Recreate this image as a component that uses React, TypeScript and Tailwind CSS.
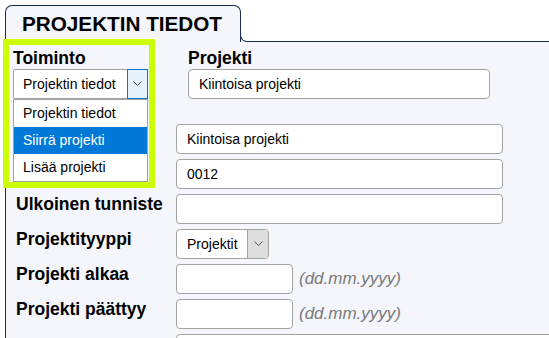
const line = "border-[#172b4d]";

function Chevron({ color = "#444" }: { color?: string }) {
  return (
    <svg width="9" height="6" viewBox="0 0 9 6" fill="none">
      <polyline points="0.5,0.5 4.5,4.5 8.5,0.5" stroke={color} strokeWidth="1" />
    </svg>
  );
}

function TextInput({ value = "", w }: { value?: string; w: string }) {
  return (
    <div className={`${w} h-[30px] rounded-[4px] border border-[#a3a3a3] bg-white pl-[10px] flex items-center text-[14px]`}>
      {value}
    </div>
  );
}

// first two rows have their labels under the open Toiminto menu
const rows = [
  { label: "", value: "Kiintoisa projekti" },
  { label: "", value: "0012" },
  { label: "Ulkoinen tunniste", value: "" },
];

export default function App() {
  return (
    <div className="min-h-screen overflow-hidden bg-white pl-[5px] pt-[5px] font-['Liberation_Sans',Arial,sans-serif] text-black">
      {/* tab */}
      <div className="flex items-end">
        <div className={`h-[37px] w-[236px] shrink-0 rounded-t-[7px] border-l border-r border-t ${line} bg-[#f4f6fb] pl-[16px] flex items-center text-[20.7px] font-bold leading-none`}>
          PROJEKTIN TIEDOT
        </div>
        <div className={`-ml-[1px] h-[7px] flex-1 rounded-bl-[7px] border-b border-l ${line} bg-white`} />
      </div>

      <div className={`h-[300px] border-l ${line} bg-[#f4f6fb] pl-[10px] pt-[6px]`}>
        {/* top row */}
        <div className="flex">
          <div className="relative h-[51px] w-[172px] shrink-0">
            <div className="absolute left-[-13px] top-[-9px] z-10 h-[149px] w-[152px] border-[6px] border-[#ccff00] bg-[#f4f6fb] pl-[4px] pt-[3px]">
              <div className="text-[17.5px] font-bold leading-[21px]">Toiminto</div>
              <div className="flex h-[30px] w-[135px] rounded-[2px] border border-[#a3a3a3] bg-white">
                <div className="flex flex-1 items-center pl-[9px] text-[14px]">Projektin tiedot</div>
                <div className="-my-[1px] -mr-[1px] flex w-[21px] items-center justify-center border border-[#0078d7] bg-[#e5f1fb]">
                  <Chevron />
                </div>
              </div>
              <div className="w-[135px] border border-[#a3a3a3] bg-white text-[14px]">
                <div className="flex h-[27px] items-center pl-[9px]">Projektin tiedot</div>
                <div className="flex h-[27px] items-center bg-[#0078d7] pl-[9px] text-white">Siirrä projekti</div>
                <div className="flex h-[27px] items-center pl-[9px]">Lisää projekti</div>
              </div>
            </div>
          </div>
          <div>
            <div className="text-[17.5px] font-bold leading-[21px]">Projekti</div>
            <TextInput value="Kiintoisa projekti" w="w-[302px]" />
          </div>
        </div>

        {/* form rows */}
        <div className="mt-[25px] grid grid-cols-[160px_auto] items-start gap-y-[5px]">
          {rows.map((r, i) => (
            <>
              <div key={i} className="text-[17.5px] font-bold leading-[21px]">{r.label}</div>
              <TextInput value={r.value} w="w-[327px]" />
            </>
          ))}

          <div className="text-[17.5px] font-bold leading-[21px]">Projektityyppi</div>
          <div className="flex h-[30px] w-[93px] overflow-hidden rounded-[4px] border border-[#a3a3a3] bg-white">
            <div className="flex flex-1 items-center pl-[10px] text-[14px]">Projektit</div>
            <div className="flex w-[21px] items-center justify-center border-l border-[#a3a3a3] bg-[#dddddd]">
              <Chevron color="#555" />
            </div>
          </div>

          {["Projekti alkaa", "Projekti päättyy"].map((l) => (
            <>
              <div key={l} className="text-[17.5px] font-bold leading-[21px]">{l}</div>
              <div className="flex items-center gap-[6px]">
                <TextInput w="w-[117px]" />
                <span className="text-[17px] italic text-[#7a7a7a]">(dd.mm.yyyy)</span>
              </div>
            </>
          ))}

          <div />
          <div className="h-[60px] w-[420px] rounded-[4px] border border-[#a3a3a3] bg-white" />
        </div>
      </div>
    </div>
  );
}
